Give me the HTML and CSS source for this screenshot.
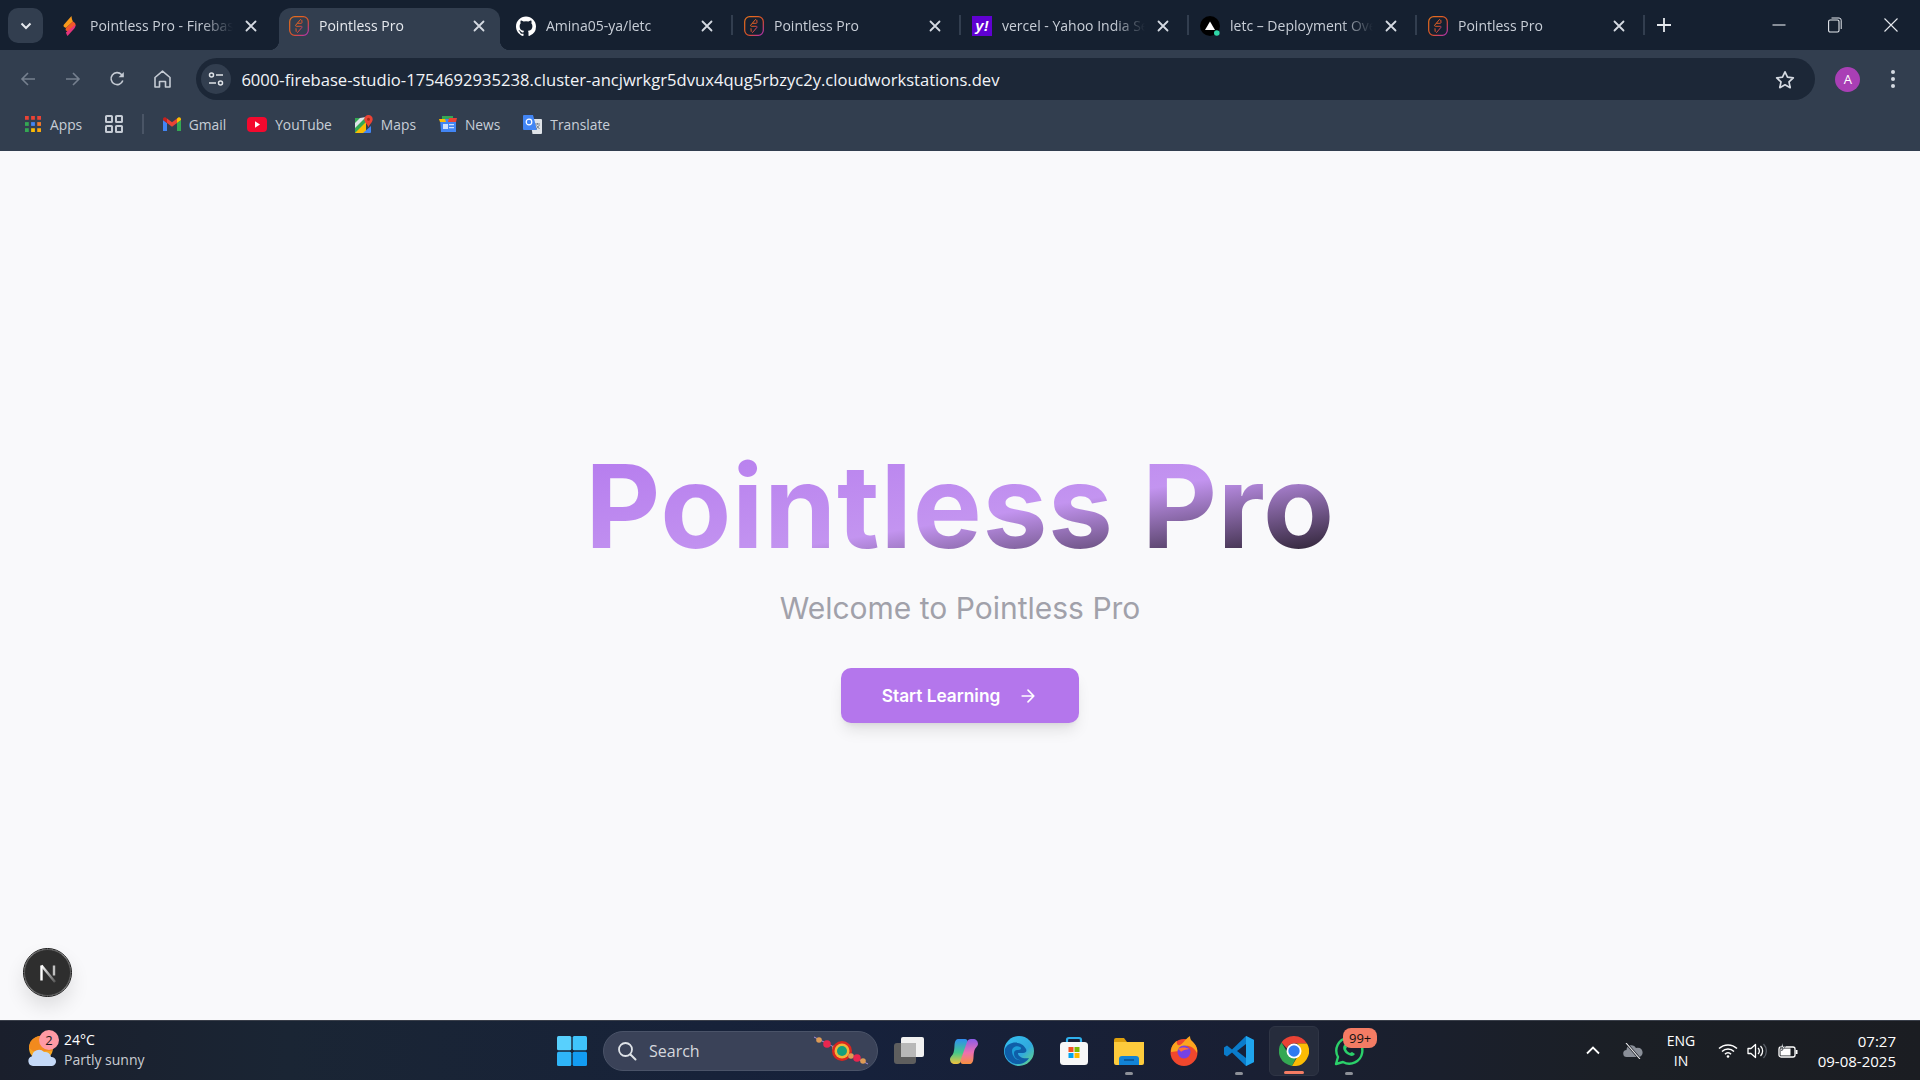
FILE: index.html
```html
<!DOCTYPE html>
<html lang="en">
<head>
    <meta charset="UTF-8">
    <title>Pointless Pro</title>
    <link rel="stylesheet" href="styles.css">
</head>
<body>
    <svg class="defs" width="0" height="0">
        <defs>
            <linearGradient id="pp" x1="0" y1="0" x2="1" y2="1">
                <stop offset="0" stop-color="#e8741c"/><stop offset=".6" stop-color="#dc4f2a"/><stop offset="1" stop-color="#b02ec0"/>
            </linearGradient>
            <linearGradient id="nfade" x1="0" y1="0" x2="1" y2="1">
                <stop offset="0" stop-color="#fff"/><stop offset="1" stop-color="#fff" stop-opacity=".2"/>
            </linearGradient>
            <linearGradient id="cop1" x1="0" y1="0" x2="0" y2="1">
                <stop offset="0" stop-color="#2f8cf0"/><stop offset=".55" stop-color="#45c88a"/><stop offset="1" stop-color="#f2c23c"/>
            </linearGradient>
            <linearGradient id="cop2" x1="0" y1="0" x2="0" y2="1">
                <stop offset="0" stop-color="#8a5ce8"/><stop offset=".55" stop-color="#ee6fb0"/><stop offset="1" stop-color="#f7913f"/>
            </linearGradient>
            <symbol id="pointless" viewBox="0 0 20 20">
                <rect x=".7" y=".7" width="18.600" height="18.600" rx="5" fill="none" stroke="url(#pp)" stroke-width="1.200"/>
                <path d="M11.500 3.500 6.700 9.200c-.4.6 0 1.100.6 1.100h5c.7 0 1 .6.6 1.100l-4.400 5.100M8.800 7.300h3.400c.5 0 .8-.3.8-.8l-.2-2.300M7 12.700l.2 2.700" fill="none" stroke="url(#pp)" stroke-width="1" stroke-linecap="round" stroke-linejoin="round"/>
            </symbol>
            <symbol id="close" viewBox="0 0 12 12">
                <path d="M1.500 1.500l9 9M10.500 1.500l-9 9" stroke="#d5dae2" stroke-width="1.800" stroke-linecap="round"/>
            </symbol>
        </defs>
    </svg>

    <header class="browser">
        <div class="tabstrip">
            <button class="tab-search">
                <svg width="12" height="8" viewBox="0 0 12 8"><path d="M1.500 1.500 6 6l4.500-4.500" fill="none" stroke="#e6e9ee" stroke-width="2"/></svg>
            </button>
            <div class="tab">
                <svg class="fav" viewBox="0 0 20 20"><path d="M11.500 0 4 8.500c-.8 1-.6 2.300.6 2.800l1.400.6 7-6.500C12 4 11.700 2 11.500 0z" fill="#f89a1c"/><path d="M6 11.900 13 5.400c2.200 1 3.100 3 2.300 4.700L8.500 16.500 5.500 14z" fill="#f4572a"/><path d="M15.300 8.800c.3 1.300 0 2.600-1 3.700L7.500 20c-.8-1.400-1.300-2.300-1.600-3.400z" fill="#e5347c"/></svg>
                <span class="tab-title">Pointless Pro - Firebase Studio</span>
                <svg class="tab-close"><use href="#close"/></svg>
            </div>
            <div class="tab active">
                <svg class="fav"><use href="#pointless"/></svg>
                <span class="tab-title">Pointless Pro</span>
                <svg class="tab-close"><use href="#close"/></svg>
            </div>
            <div class="tab">
                <svg class="fav" viewBox="0 0 24 24"><path fill="#fff" d="M12 .5C5.370.5 0 5.870 0 12.500c0 5.300 3.440 9.800 8.200 11.390.6.11.82-.26.82-.58v-2.030c-3.340.73-4.040-1.610-4.040-1.610-.55-1.390-1.340-1.760-1.340-1.760-1.090-.75.08-.73.08-.73 1.200.08 1.840 1.240 1.840 1.240 1.070 1.830 2.810 1.300 3.500 1 .11-.78.42-1.310.76-1.610-2.670-.3-5.470-1.330-5.470-5.930 0-1.310.47-2.380 1.240-3.220-.12-.3-.54-1.520.12-3.180 0 0 1.010-.32 3.300 1.230a11.500 11.500 0 0 1 6 0c2.290-1.550 3.300-1.230 3.300-1.230.66 1.660.24 2.880.12 3.180.77.84 1.240 1.910 1.240 3.220 0 4.610-2.810 5.630-5.480 5.920.43.37.81 1.100.81 2.220v3.290c0 .32.22.7.83.58A12 12 0 0 0 24 12.500C24 5.870 18.630.5 12 .5z"/></svg>
                <span class="tab-title">Amina05-ya/letc</span>
                <svg class="tab-close"><use href="#close"/></svg>
            </div>
            <div class="tab">
                <svg class="fav"><use href="#pointless"/></svg>
                <span class="tab-title">Pointless Pro</span>
                <svg class="tab-close"><use href="#close"/></svg>
            </div>
            <div class="tab">
                <span class="fav yahoo">y!</span>
                <span class="tab-title">vercel - Yahoo India Search Results</span>
                <svg class="tab-close"><use href="#close"/></svg>
            </div>
            <div class="tab">
                <svg class="fav" viewBox="0 0 20 20"><circle cx="10" cy="10" r="10" fill="#000"/><path d="M10 5.500 15 14H5z" fill="#fff"/><circle cx="16.800" cy="17" r="2.800" fill="#2fd8a8"/></svg>
                <span class="tab-title">letc – Deployment Overview</span>
                <svg class="tab-close"><use href="#close"/></svg>
            </div>
            <div class="tab">
                <svg class="fav"><use href="#pointless"/></svg>
                <span class="tab-title">Pointless Pro</span>
                <svg class="tab-close"><use href="#close"/></svg>
            </div>
            <svg class="new-tab" width="14" height="14" viewBox="0 0 14 14"><path d="M7 0v14M0 7h14" stroke="#e6e9ee" stroke-width="1.800"/></svg>
            <div class="win-controls">
                <svg width="14" height="14" viewBox="0 0 14 14"><path d="M.5 7h13" stroke="#e6e9ee" stroke-width="1.100"/></svg>
                <svg width="14" height="16" viewBox="0 0 14 16"><rect x=".6" y="3" width="10.400" height="12" rx="1.500" fill="none" stroke="#e6e9ee" stroke-width="1.100"/><path d="M3.500 1h7.500a2.200 2.200 0 0 1 2.200 2.200V12" fill="none" stroke="#e6e9ee" stroke-width="1"/></svg>
                <svg width="14" height="14" viewBox="0 0 14 14"><path d="M.5.5l13 13M13.500.5l-13 13" stroke="#e6e9ee" stroke-width="1.100"/></svg>
            </div>
        </div>

        <div class="toolbar">
            <span class="nav-btn">
                <svg width="16" height="16" viewBox="0 0 16 16"><path d="M15 8H2M8 2 2 8l6 6" fill="none" stroke="#76808f" stroke-width="1.600"/></svg>
            </span>
            <span class="nav-btn">
                <svg width="16" height="16" viewBox="0 0 16 16"><path d="M1 8h13M8 2l6 6-6 6" fill="none" stroke="#76808f" stroke-width="1.600"/></svg>
            </span>
            <span class="nav-btn">
                <svg width="16" height="16" viewBox="0 0 16 16"><path d="M13.800 9.500A6 6 0 1 1 12.500 3.500L14 5" fill="none" stroke="#c5cbd4" stroke-width="1.600"/><path d="M14.800 1v5.200H9.600z" fill="#c5cbd4"/></svg>
            </span>
            <span class="nav-btn">
                <svg width="17" height="18" viewBox="0 0 17 18"><path d="M1 7.500 8.500 1.200 16 7.500V17h-4.500v-5.500h-6V17H1z" fill="none" stroke="#c5cbd4" stroke-width="1.600" stroke-linejoin="round"/></svg>
            </span>
            <div class="omnibox">
                <span class="site-info">
                    <svg width="16" height="14" viewBox="0 0 16 14"><path d="M8 3h7M1 11h7" stroke="#dfe3e8" stroke-width="1.500"/><circle cx="3.500" cy="3" r="2" fill="none" stroke="#dfe3e8" stroke-width="1.500"/><circle cx="12.500" cy="11" r="2" fill="none" stroke="#dfe3e8" stroke-width="1.500"/></svg>
                </span>
                <span class="url">6000-firebase-studio-1754692935238.cluster-ancjwrkgr5dvux4qug5rbzyc2y.cloudworkstations.dev</span>
                <svg class="star" width="20" height="19" viewBox="0 0 20 19"><path d="m10 1.800 2.500 5.400 5.800.7-4.300 4 1.200 5.800L10 14.800l-5.200 2.900L6 11.900l-4.300-4 5.800-.7z" fill="none" stroke="#d5dae2" stroke-width="1.700" stroke-linejoin="round"/></svg>
            </div>
            <span class="avatar">A</span>
            <svg class="kebab" width="4" height="18" viewBox="0 0 4 18"><circle cx="2" cy="2" r="2" fill="#d5dae2"/><circle cx="2" cy="9" r="2" fill="#d5dae2"/><circle cx="2" cy="16" r="2" fill="#d5dae2"/></svg>
        </div>

        <nav class="bookmarks">
            <span class="bm bm-apps">
                <svg width="16" height="16" viewBox="0 0 17 17">
                    <rect width="4" height="4" fill="#ea4335"/><rect x="6.500" width="4" height="4" fill="#ea4335"/><rect x="13" width="4" height="4" fill="#ea4335"/>
                    <rect y="6.500" width="4" height="4" fill="#34a853"/><rect x="6.500" y="6.500" width="4" height="4" fill="#4285f4"/><rect x="13" y="6.500" width="4" height="4" fill="#f0772c"/>
                    <rect y="13" width="4" height="4" fill="#34a853"/><rect x="6.500" y="13" width="4" height="4" fill="#fbbc04"/><rect x="13" y="13" width="4" height="4" fill="#fba80c"/>
                </svg>
                Apps
            </span>
            <svg class="bm-tabs" width="18" height="18" viewBox="0 0 18 18"><g fill="none" stroke="#c5cbd4" stroke-width="2"><rect x="1" y="1" width="6" height="6" rx=".6"/><rect x="11" y="1" width="6" height="6" rx=".6"/><rect x="1" y="11" width="6" height="6" rx=".6"/><rect x="11" y="11" width="6" height="6" rx=".6"/></g></svg>
            <span class="bm-sep"></span>
            <span class="bm bm-gmail">
                <svg width="18" height="15" viewBox="0 0 18 15"><path d="M0 14V3l4 3v8z" fill="#4285f4"/><path d="M18 14V3l-4 3v8z" fill="#34a853"/><path d="M4 6 9 9.700 14 6V1.500L9 5.200 4 1.500z" fill="#ea4335"/><path d="M0 3 4 6V1.500L3 .8C1.500-.3 0 .8 0 2.500z" fill="#c5221f"/><path d="M18 3 14 6V1.500l1-.7c1.500-1.100 3 0 3 1.700z" fill="#fbbc04"/></svg>
                Gmail
            </span>
            <span class="bm">
                <svg width="20" height="15" viewBox="0 0 20 15"><rect width="20" height="15" rx="4" fill="#f4092e"/><path d="m8 4.200 5 3.300-5 3.300z" fill="#fff"/></svg>
                YouTube
            </span>
            <span class="bm">
                <svg width="18" height="18" viewBox="0 0 18 18"><path d="M0 3h11v15H0z" fill="#34a853"/><path d="M0 18 11 7v11z" fill="#fbbc04"/><path d="M8 18l8-7v6a1 1 0 0 1-1 1z" fill="#4285f4"/><path d="M5 3 0 8v5l11-11z" fill="#dfe3e8"/><path d="M13.500 0A4.200 4.200 0 0 1 17.700 4.200c0 3-3 4.800-4.200 8-1.200-3.200-4.200-5-4.200-8A4.200 4.200 0 0 1 13.500 0z" fill="#ea4335"/><circle cx="13.500" cy="4.200" r="1.500" fill="#a52714"/></svg>
                Maps
            </span>
            <span class="bm">
                <svg width="18" height="18" viewBox="0 0 18 18"><path d="M3 1h11v6H3z" fill="#34a853"/><path d="M1 4h8l8 1v12H2z" fill="#4285f4"/><path d="M0 4h6l1 3H1z" fill="#fbbc04"/><path d="M10 3h8l-1 4h-8z" fill="#ea4335"/><rect x="4" y="9" width="5" height="5" fill="#cfe0fc"/><path d="M10 9h5v1.300h-5zM10 12h5v1.300h-5z" fill="#cfe0fc"/></svg>
                News
            </span>
            <span class="bm">
                <svg width="19" height="19" viewBox="0 0 19 19"><path d="M7 4h11a1 1 0 0 1 1 1v13a1 1 0 0 1-1 1H9.500z" fill="#dfe3e8"/><path d="M1 0h9l4 15H1a1 1 0 0 1-1-1V1a1 1 0 0 1 1-1z" fill="#4285f4"/><circle cx="6" cy="7" r="2.800" fill="none" stroke="#fff" stroke-width="1.200"/><path d="M12 9h5M14.500 8v1.500M13 14l3.500-4M13.500 10.500l3 3.500" stroke="#76808f" stroke-width="1"/></svg>
                Translate
            </span>
        </nav>
    </header>

    <main class="page">
        <h1 class="title">Pointless Pro</h1>
        <p class="subtitle">Welcome to Pointless Pro</p>
        <button class="start-btn">
            Start Learning
            <svg width="20" height="20" viewBox="0 0 24 24"><path d="M5 12h14M12 5l7 7-7 7" fill="none" stroke="#fff" stroke-width="2" stroke-linecap="round" stroke-linejoin="round"/></svg>
        </button>
        <span class="next-badge">
            <svg width="22" height="22" viewBox="0 0 22 22"><path d="M4.500 18.500V3.500" stroke="#fff" stroke-width="2.400"/><path d="M4.500 3.500 18 20" stroke="url(#nfade)" stroke-width="2.400"/><path d="M17 3.500v10" stroke="#fff" stroke-opacity=".7" stroke-width="2.400"/></svg>
        </span>
    </main>

    <footer class="taskbar">
        <div class="weather">
            <span class="weather-icon">
                <svg width="30" height="34" viewBox="0 0 30 34"><circle cx="14" cy="14" r="12" fill="#f5a623"/><path d="M2 14a12 12 0 0 1 20-9l3 4v8H6z" fill="#f28a1e"/><path d="M6 32a5 5 0 0 1-1-9.800A7 7 0 0 1 17 18a6 6 0 0 1 7 5 4.500 4.500 0 0 1 1 9z" fill="#c5d9f7"/></svg>
                <span class="weather-badge">2</span>
            </span>
            <div class="weather-text">
                <span class="temp">24°C</span>
                <span class="cond">Partly sunny</span>
            </div>
        </div>

        <svg class="start" width="30" height="30" viewBox="0 0 30 30"><rect width="14.300" height="14.300" rx="1.500" fill="#58d0fd"/><rect x="15.700" width="14.300" height="14.300" rx="1.500" fill="#3fc4fc"/><rect y="15.700" width="14.300" height="14.300" rx="1.500" fill="#2fb5f8"/><rect x="15.700" y="15.700" width="14.300" height="14.300" rx="1.500" fill="#139cf2"/></svg>

        <div class="search">
            <svg width="20" height="20" viewBox="0 0 20 20"><circle cx="8.500" cy="8.500" r="6.500" fill="none" stroke="#dfe3e8" stroke-width="1.800"/><path d="m13.500 13.500 5 5" stroke="#dfe3e8" stroke-width="2" stroke-linecap="round"/></svg>
            <span>Search</span>
            <svg class="rakhi" width="56" height="30" viewBox="0 0 56 30">
                <path d="M1 1 55 28" stroke="#a58bd8" stroke-width="1"/>
                <circle cx="6" cy="4" r="2.800" fill="#dd9a55"/><circle cx="14" cy="8" r="3.800" fill="#e8264f"/><circle cx="22" cy="12" r="2.800" fill="#dd9a55"/>
                <circle cx="29" cy="15" r="10" fill="#d9261f"/><circle cx="29" cy="15" r="7.500" fill="#f0b43a"/><circle cx="29" cy="15" r="5" fill="#14a07c"/>
                <circle cx="38" cy="20" r="2.800" fill="#dd9a55"/><circle cx="44" cy="22" r="3.800" fill="#e8264f"/><circle cx="50" cy="25" r="2.800" fill="#dd9a55"/>
            </svg>
        </div>

        <div class="apps">
            <span class="app">
                <svg width="30" height="28" viewBox="0 0 30 28"><rect y="6" width="22" height="21" rx="3" fill="#5e5e5e"/><rect x="7" width="23" height="20" rx="2" fill="#f1f1f1"/><rect x="7" y="6" width="15" height="14" fill="#b8b8b8"/></svg>
            </span>
            <span class="app">
                <svg width="30" height="28" viewBox="0 0 30 28"><path d="M9 2h7c2 0 3 2 2.500 3.500L12 24c-.6 2-2 3-4 3H6c-3 0-5-2-5-5 0-2 2-3 3-5 2-4 1-9 2-12 .4-1.500 1.500-3 3-3z" fill="url(#cop1)"/><path d="M21 27h-7c-2 0-3-2-2.500-3.500L18 5c.6-2 2-3 4-3h2c3 0 5 2 5 5 0 2-2 3-3 5-2 4-1 9-2 12-.4 1.500-1.500 3-3 3z" fill="url(#cop2)"/></svg>
            </span>
            <span class="app">
                <svg width="30" height="30" viewBox="0 0 30 30"><defs><linearGradient id="edge1" x1="0" y1="0" x2="1" y2="1"><stop offset="0" stop-color="#35c1f1"/><stop offset=".6" stop-color="#30a9dd"/><stop offset="1" stop-color="#6fdc76"/></linearGradient></defs><circle cx="15" cy="15" r="15" fill="url(#edge1)"/><path d="M1 13C4 5 18 4 22 13c1 2 0 4-3 4h-5c0 4 5 6 11 5-3 6-13 8-18 4C2 23 0 18 1 13z" fill="#0f5ea8"/><path d="M8 15c0-4 5-6 8-4 2 1 1 3-2 3-3 0-4 1-4 4 0 3 3 6 7 6-5 1-9-4-9-9z" fill="#1c9ed8"/></svg>
            </span>
            <span class="app">
                <svg width="30" height="30" viewBox="0 0 30 30"><path d="M8 8V4a2 2 0 0 1 2-2h10a2 2 0 0 1 2 2v4" fill="none" stroke="#2fb0ec" stroke-width="2.200"/><rect x="1" y="6" width="28" height="23" rx="3.500" fill="#f7f7f7"/><rect x="9.500" y="11" width="5" height="5" fill="#f25022"/><rect x="15.500" y="11" width="5" height="5" fill="#7fba00"/><rect x="9.500" y="17" width="5" height="5" fill="#00a4ef"/><rect x="15.500" y="17" width="5" height="5" fill="#ffb900"/></svg>
            </span>
            <span class="app running">
                <svg width="30" height="28" viewBox="0 0 30 28"><path d="M0 3a2 2 0 0 1 2-2h8l3 4H0z" fill="#dd9f0d"/><path d="M0 5h30v21a2 2 0 0 1-2 2H2a2 2 0 0 1-2-2z" fill="#fdcb3c"/><path d="M5 28v-6a3 3 0 0 1 3-3h14a3 3 0 0 1 3 3v6z" fill="#1283d6"/><path d="M10 23h10" stroke="#0b4f8c" stroke-width="1.500"/></svg>
            </span>
            <span class="app">
                <svg width="30" height="30" viewBox="0 0 30 30"><circle cx="15" cy="16.500" r="13.500" fill="#f0472d"/><path d="M2 16c0-6 3-9 6-11-1 3 1 5 3 4 3-1 4-5 10-9 0 3 1 4 3 6 3 3 5 7 4 11-3-6-8-8-13-7-4 0-6 2-5 5z" fill="#fba51f"/><circle cx="15" cy="16" r="6.500" fill="#7542e5"/><path d="M9 13c3-2 8-2 11 0-2 1-5 0-8 3 0-1-2-2-3-3z" fill="#ff7139"/></svg>
            </span>
            <span class="app running">
                <svg width="30" height="30" viewBox="0 0 30 30"><path d="M22 0 30 4v22l-8 4L8 16.500l-5 4L0 18.500v-7l3-2 5 4z" fill="#0a7ccb"/><path d="M22 0 30 4v22l-8 4z" fill="#1fa5ee"/><path d="M22 8v14l-9-7z" fill="#15223b"/></svg>
            </span>
            <span class="app active">
                <svg width="30" height="30" viewBox="0 0 30 30"><path d="M15 0a15 15 0 0 1 13 7.500H15a7.500 7.500 0 0 0-7 5L2.500 6.500A15 15 0 0 1 15 0z" fill="#ea4335"/><path d="M2.500 6.500 9 17.500A7.500 7.500 0 0 0 17 22l-4 7.900A15 15 0 0 1 2.500 6.500z" fill="#34a853"/><path d="M28 7.500A15 15 0 0 1 13 29.900L20 18a7.500 7.500 0 0 0-2-10.500z" fill="#fbbc04"/><circle cx="15" cy="15" r="7.500" fill="#fff"/><circle cx="15" cy="15" r="5.700" fill="#2f7bf0"/></svg>
            </span>
            <span class="app running">
                <svg width="30" height="30" viewBox="0 0 30 30"><path d="M2 28l2-7A13 13 0 1 1 9 26z" fill="none" stroke="#2bd06a" stroke-width="2.400" stroke-linejoin="round"/><path d="M10 9c-2 3 0 7 3 9s6 3 8 0l-3-2-2 1c-2-1-3-2-4-4l1-2-2-3z" fill="#2bd06a"/></svg>
                <span class="wa-badge">99+</span>
            </span>
        </div>

        <div class="tray">
            <svg class="tray-chevron" width="14" height="9" viewBox="0 0 14 9"><path d="M1 7.500 7 1.500l6 6" fill="none" stroke="#fff" stroke-width="1.800"/></svg>
            <svg class="tray-cloud" width="20" height="16" viewBox="0 0 20 16"><path d="M4 14a3.500 3.500 0 0 1-.5-7A5 5 0 0 1 13 5a4.500 4.500 0 0 1 3.500 9z" fill="#8a8f98"/><path d="M3 0l14 16" stroke="#1a1e26" stroke-width="2.500"/><path d="M3 0l14 16" stroke="#f1f1f1" stroke-width="1.100"/></svg>
            <div class="lang"><span>ENG</span><span>IN</span></div>
            <svg class="tray-wifi" width="20" height="15" viewBox="0 0 20 15"><g fill="none" stroke="#fff" stroke-width="1.500"><path d="M1 5.500a13 13 0 0 1 18 0"/><path d="M4 8.500a8.500 8.500 0 0 1 12 0"/><path d="M7 11.200a4 4 0 0 1 6 0"/></g><circle cx="10" cy="13.500" r="1.300" fill="#fff"/></svg>
            <svg class="tray-vol" width="20" height="16" viewBox="0 0 20 16"><path d="M1 5.500h3l4.500-4v13L4 10.500H1z" fill="none" stroke="#fff" stroke-width="1.300" stroke-linejoin="round"/><path d="M11 5a4 4 0 0 1 0 6" fill="none" stroke="#fff" stroke-width="1.300"/><path d="M13.500 3a7 7 0 0 1 0 10" fill="none" stroke="#fff" stroke-width="1.300"/><path d="M16.500 1a10 10 0 0 1 0 14" fill="none" stroke="#5a5f68" stroke-width="1.300"/></svg>
            <svg class="tray-bat" width="20" height="16" viewBox="0 0 20 16"><rect x="1" y="4" width="16" height="10" rx="2" fill="none" stroke="#fff" stroke-width="1.300"/><rect x="2.500" y="5.500" width="10" height="7" fill="#fff"/><rect x="17.700" y="7" width="1.800" height="4" fill="#fff"/><path d="M5 0 2.500 4.500h2.500L3.500 8 7.500 3.500H5z" fill="#fff" stroke="#1a1e26" stroke-width=".6"/></svg>
            <div class="clock"><span>07:27</span><span>09-08-2025</span></div>
        </div>
    </footer>
</body>
</html>
```

FILE: styles.css
```css
* {
    box-sizing: border-box;
}
html, body {
    margin: 0;
    height: 100%;
}
body {
    width: 1920px;
    height: 1080px;
    overflow: hidden;
    display: flex;
    flex-direction: column;
    background: #f9f9fb;
    font-family: "Open Sans", "Noto Sans", sans-serif;
}
svg {
    display: block;
    flex-shrink: 0;
}
.defs {
    position: absolute;
}

/* browser chrome */
.browser {
    height: 151px;
    flex-shrink: 0;
    background: #323e4f;
    color: #e6e9ee;
}
.tabstrip {
    height: 50px;
    display: flex;
    align-items: flex-end;
    background: #152030;
    padding-left: 8px;
}
.tab-search {
    width: 35px;
    height: 35px;
    align-self: flex-start;
    margin: 8px 8px 0 0;
    border: none;
    border-radius: 10px;
    background: #323e4f;
    display: flex;
    align-items: center;
    justify-content: center;
    padding: 0;
    flex: none;
}
.tab {
    position: relative;
    flex: none;
    width: 228px;
    height: 42px;
    padding: 0 20px 7px 9px;
    display: flex;
    align-items: center;
    gap: 10px;
    color: #c8ced7;
    font-size: 14px;
}
.tab::after {
    content: "";
    position: absolute;
    right: 2px;
    top: 7px;
    width: 2px;
    height: 20px;
    background: #323e4f;
}
.tab:nth-child(2)::after,
.tab:nth-child(3)::after {
    display: none;
}
.tab.active {
    width: 221px;
    margin-right: 7px;
    padding: 0 13px 7px 20px;
    background: #323e4f;
    border-radius: 12px 12px 0 0;
    color: #e6e9ee;
    padding-left: 10px;
}
.tab.active::before {
    content: "";
    position: absolute;
    left: -10px;
    bottom: 0;
    width: 10px;
    height: 10px;
    background: radial-gradient(circle at 0 0, #152030 10px, #323e4f 10.500px);
}
.tab.active::after {
    display: block;
    right: -10px;
    top: auto;
    bottom: 0;
    width: 10px;
    height: 10px;
    background: radial-gradient(circle at 100% 0, #152030 10px, #323e4f 10.500px);
}
.fav {
    width: 20px;
    height: 20px;
    flex-shrink: 0;
}
.yahoo {
    background: #6001d2;
    color: #fff;
    font: italic bold 15px/20px "Liberation Sans", sans-serif;
    text-align: center;
}
.tab-title {
    flex: 1;
    min-width: 0;
    white-space: nowrap;
    overflow: hidden;
    padding-bottom: 1px;
    -webkit-mask-image: linear-gradient(to right, #000 78%, transparent 100%);
    mask-image: linear-gradient(to right, #000 78%, transparent 100%);
}
.tab-close {
    width: 12px;
    height: 12px;
    margin-left: 2px;
    margin-right: 2px;
}
.new-tab {
    align-self: flex-start;
    margin: 18px 0 0 10px;
}
.win-controls {
    margin-left: auto;
    align-self: flex-start;
    height: 50px;
    width: 148px;
    padding: 0 22px 0 0;
    display: flex;
    align-items: center;
    justify-content: space-between;
}

.toolbar {
    height: 58px;
    display: flex;
    align-items: center;
    padding-left: 6px;
}
.nav-btn {
    width: 44.6px;
    height: 36px;
    display: flex;
    align-items: center;
    justify-content: center;
}
.omnibox {
    width: 1619px;
    height: 42px;
    margin-left: 12px;
    border-radius: 21px;
    background: #1c2737;
    display: flex;
    align-items: center;
    padding-left: 5px;
    padding-right: 20px;
}
.site-info {
    width: 30px;
    height: 30px;
    border-radius: 50%;
    background: #323e4f;
    display: flex;
    align-items: center;
    justify-content: center;
}
.url {
    margin-left: 10px;
    font-size: 16.6px;
    color: #f2f4f7;
}
.star {
    margin-left: auto;
}
.avatar {
    width: 25px;
    height: 25px;
    margin-left: 20px;
    border-radius: 50%;
    background: #a93fb5;
    color: #fff;
    font-size: 13px;
    display: flex;
    align-items: center;
    justify-content: center;
}
.kebab {
    margin-left: 31px;
}
.bookmarks {
    height: 43px;
    padding: 0 0 11px 25px;
    display: flex;
    align-items: center;
    font-size: 13.8px;
    color: #c8ced7;
}
.bm {
    display: flex;
    align-items: center;
    gap: 8px;
    margin-right: 23px;
}
.bm-apps {
    gap: 9px;
    margin-right: 22.5px;
}
.bm-gmail {
    margin-right: 21px;
}
.bm-sep {
    width: 2px;
    height: 20px;
    margin: 0 19px;
    background: #4a5566;
}

/* page content */
.page {
    position: relative;
    flex: 1;
    display: flex;
    flex-direction: column;
    align-items: center;
    justify-content: center;
    font-family: Inter, "Liberation Sans", sans-serif;
}
.title {
    margin: 0;
    font-size: 116px;
    font-weight: 700;
    line-height: 1;
    letter-spacing: .7px;
    padding-bottom: 8px;
    background: linear-gradient(to bottom right, #b57bee 0%, #c394f0 54%, #2a2030 92%);
    -webkit-background-clip: text;
    background-clip: text;
    color: transparent;
}
.subtitle {
    margin: 18px 0 0;
    font-size: 30px;
    line-height: 36px;
    color: #a1a1aa;
}
.start-btn {
    margin-top: 42px;
    width: 238px;
    height: 55px;
    border: none;
    border-radius: 10px;
    background: #b476ec;
    color: #fff;
    font: 600 17.3px Inter, sans-serif;
    display: flex;
    align-items: center;
    justify-content: center;
    gap: 18px;
    box-shadow: 0 10px 15px -3px rgba(0,0,0,.1), 0 4px 6px -4px rgba(0,0,0,.1);
}
.next-badge {
    position: absolute;
    left: 24px;
    bottom: 24px;
    width: 47px;
    height: 47px;
    border-radius: 50%;
    background: #2e2e2e;
    border: 1px solid #555;
    outline: 1px solid #111;
    display: flex;
    align-items: center;
    justify-content: center;
    box-shadow: 0 10px 20px rgba(0,0,0,.12);
}

/* windows taskbar */
.taskbar {
    height: 60px;
    flex-shrink: 0;
    border-top: 1px solid #3a3f4a;
    background: linear-gradient(to right, #1a1f2c 0%, #1a2534 15%, #16213b 45%, #191f33 65%, #1b1f25 85%, #1b1d22 100%);
    color: #fff;
    display: flex;
    align-items: center;
}
.weather {
    width: 557px;
    padding-left: 27px;
    display: flex;
    align-items: center;
    gap: 7px;
}
.weather-icon {
    position: relative;
    width: 30px;
    height: 34px;
}
.weather-badge {
    position: absolute;
    top: -4px;
    left: 12px;
    width: 20px;
    height: 20px;
    border-radius: 50%;
    background: #ff9aa4;
    color: #1a1a1a;
    font-size: 13px;
    text-align: center;
    line-height: 20px;
}
.weather-text {
    display: flex;
    flex-direction: column;
    margin-top: -2px;
    font-size: 14px;
    line-height: 20px;
}
.cond {
    color: #c9ccd2;
}
.search {
    width: 275px;
    height: 40px;
    margin-left: 16px;
    border: 1px solid #4a5368;
    border-radius: 20px;
    background: #3a4258;
    display: flex;
    align-items: center;
    padding-left: 13px;
    gap: 12px;
    font-size: 16px;
    color: #d5d8de;
}
.rakhi {
    margin-left: auto;
    margin-right: 8px;
}
.apps {
    display: flex;
    align-items: center;
    margin-left: 6px;
}
.app {
    position: relative;
    width: 50px;
    height: 50px;
    margin-right: 5px;
    border-radius: 6px;
    display: flex;
    align-items: center;
    justify-content: center;
}
.app.running::after,
.app.active::after {
    content: "";
    position: absolute;
    left: 21px;
    bottom: 1px;
    width: 8px;
    height: 3px;
    border-radius: 2px;
    background: #8d9098;
}
.app.active {
    background: #262c3c;
    border: 1px solid #2f3545;
}
.app.active::after {
    left: 14px;
    width: 20px;
    background: #f47c64;
}
.wa-badge {
    position: absolute;
    top: 2px;
    left: 19px;
    height: 20px;
    padding: 0 6px;
    border-radius: 8px;
    background: #f47c64;
    color: #111;
    font-size: 13px;
    line-height: 20px;
}
.tray {
    flex: 1;
    display: flex;
    align-items: center;
    padding-right: 24px;
    margin-left: 207px;
}
.tray-cloud {
    margin-left: 23px;
}
.lang {
    width: 48px;
    margin-left: 14px;
    display: flex;
    flex-direction: column;
    align-items: center;
    font-size: 14px;
    line-height: 20px;
}
.tray-wifi {
    margin-left: 13px;
}
.tray-vol {
    margin-left: 9px;
}
.tray-bat {
    margin-left: 11px;
}
.clock {
    margin-left: auto;
    display: flex;
    flex-direction: column;
    align-items: flex-end;
    font-size: 15px;
    line-height: 20px;
}
```
